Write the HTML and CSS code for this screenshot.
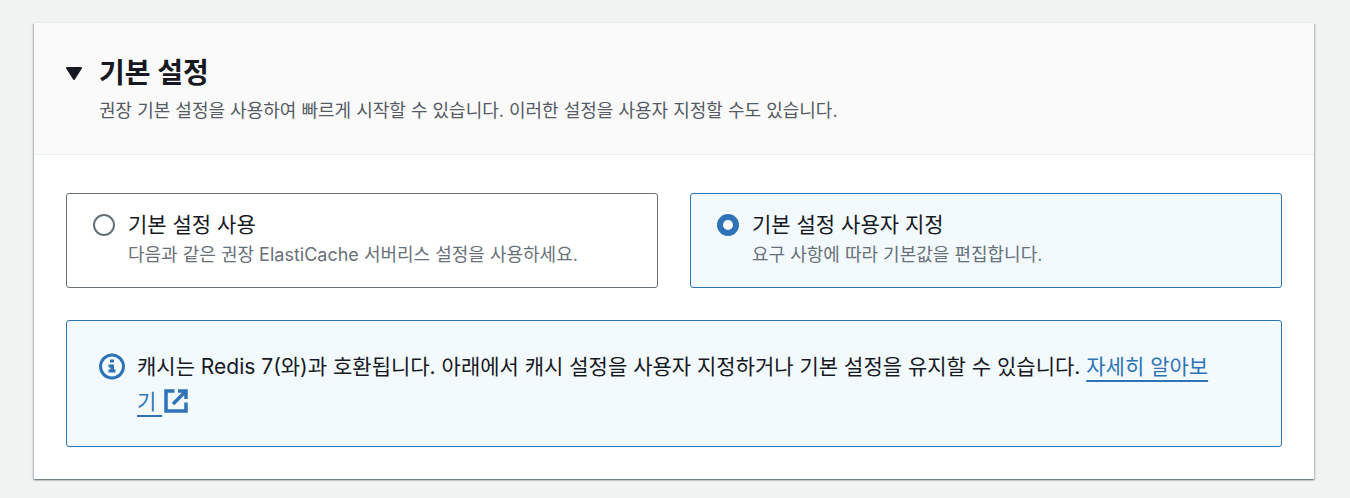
FILE: index.html
```html
<!DOCTYPE html>
<html lang="ko">

<head>
  <meta charset="utf-8">
  <meta name="viewport" content="width=device-width, initial-scale=1">
  <title>기본 설정</title>
  <link rel="stylesheet" href="styles.css">
</head>

<body>
  <section class="container">
    <div class="header">
      <button id="toggle" class="toggle" type="button" aria-expanded="true" aria-controls="content" aria-labelledby="title">
        <svg class="caret" viewBox="0 0 16 14" aria-hidden="true">
          <path d="M1 2h14L8 13z" fill="currentColor" stroke="currentColor" stroke-width="2" stroke-linejoin="round"/>
        </svg>
      </button>
      <h2 id="title">기본 설정</h2>
      <p class="description">권장 기본 설정을 사용하여 빠르게 시작할 수 있습니다. 이러한 설정을 사용자 지정할 수도 있습니다.</p>
    </div>

    <div id="content" class="content">
      <div class="tiles" role="radiogroup" aria-labelledby="title">
        <label class="tile" for="use-default">
          <input type="radio" id="use-default" name="settings" value="default">
          <span class="tile-label">기본 설정 사용</span>
          <span class="tile-description">다음과 같은 권장 ElastiCache 서버리스 설정을 사용하세요.</span>
        </label>
        <label class="tile" for="use-custom">
          <input type="radio" id="use-custom" name="settings" value="custom" checked>
          <span class="tile-label">기본 설정 사용자 지정</span>
          <span class="tile-description">요구 사항에 따라 기본값을 편집합니다.</span>
        </label>
      </div>

      <div class="alert">
        <svg class="info-icon" viewBox="0 0 26 26" aria-hidden="true">
          <circle cx="13" cy="13" r="11.5" fill="none" stroke="currentColor" stroke-width="3"/>
          <path d="M11 6h4v3h-4zM9.500 11h5.500v5h1.500v3h-7v-3h2v-2h-2z" fill="currentColor"/>
        </svg>
        <p class="alert-text">캐시는 Redis 7(와)과 호환됩니다. 아래에서 캐시 설정을 사용자 지정하거나 기본 설정을 유지할 수 있습니다. <a class="link" href="#"><span class="link-text">자세히 알아보</span><span class="link-end"><span class="link-text">기&nbsp;</span><svg class="external-icon" viewBox="0 0 24 24" aria-hidden="true"><path d="M10.500 2H2v20h20v-8.500M14 2h8v8M21.500 2.500L9 15" fill="none" stroke="currentColor" stroke-width="3.500"/></svg></span></a></p>
      </div>
    </div>
  </section>

  <script>
    const toggle = document.getElementById('toggle');
    const content = document.getElementById('content');

    toggle.addEventListener('click', () => {
      content.hidden = !content.hidden;
      toggle.setAttribute('aria-expanded', String(!content.hidden));
    });
  </script>
</body>

</html>
```
FILE: styles.css
```css
* {
  margin: 0;
  padding: 0;
  box-sizing: border-box;
}

body {
  font-family: Inter, 'Noto Sans CJK KR', sans-serif;
  background: #f1f3f3;
  color: #16191f;
  padding: 23px 36px 19px 34px;
}

.container {
  background: white;
  box-shadow: 0 1px 1px rgba(0, 28, 36, 0.3), 1px 1px 2px rgba(0, 28, 36, 0.25), -1px 1px 2px rgba(0, 28, 36, 0.25);
}

.header {
  display: grid;
  grid-template-columns: 16px 1fr;
  column-gap: 17px;
  align-items: center;
  padding: 30px 32px 25px;
  background: #fafafa;
  border-bottom: 1px solid #eaeded;
}

.header h2 {
  font-size: 28px;
  line-height: 40px;
  font-weight: bold;
}

.toggle {
  display: flex;
  border: none;
  background: none;
  color: inherit;
  cursor: pointer;
}

.toggle[aria-expanded="false"] .caret {
  transform: rotate(-90deg);
}

.caret {
  width: 16px;
  height: 14px;
}

.description {
  grid-column: 2;
  color: #545b64;
  font-size: 18px;
  line-height: 36px;
}

.content {
  padding: 38px 32px 32px;
}

.tiles {
  display: grid;
  grid-template-columns: 1fr 1fr;
  gap: 32px;
  margin-bottom: 32px;
}

.tile {
  display: grid;
  grid-template-columns: 22px 1fr;
  column-gap: 13px;
  align-items: center;
  padding: 16px 26px 17px;
  border: 1px solid #687078;
  border-radius: 3px;
  cursor: pointer;
}

.tile:has(input:checked) {
  background: #f2fafd;
  border-color: #2e73b8;
}

.tile input {
  appearance: none;
  width: 22px;
  height: 22px;
  border: 2px solid #687078;
  border-radius: 50%;
  background: white;
}

.tile input:checked {
  border: 6px solid #2e73b8;
}

.tile-label {
  font-size: 21px;
  line-height: 30px;
}

.tile-description {
  grid-column: 2;
  color: #687078;
  font-size: 18px;
  line-height: 30px;
}

.alert {
  display: flex;
  gap: 12px;
  padding: 28px 48px 27px 32px;
  background: #f2fafd;
  border: 1px solid #2e73b8;
  border-radius: 3px;
}

.info-icon {
  flex: none;
  width: 26px;
  height: 35px;
  color: #2e73b8;
}

.alert-text {
  font-size: 21px;
  line-height: 35px;
}

.link {
  color: #2e73b8;
  text-decoration: none;
}

.link-text {
  text-decoration: underline;
  text-decoration-thickness: 2px;
  text-underline-offset: 6px;
}

.link-end {
  display: inline-block;
  white-space: nowrap;
}

.external-icon {
  width: 24px;
  height: 24px;
  margin-left: 2px;
  vertical-align: -4px;
}

[hidden] {
  display: none;
}
```
